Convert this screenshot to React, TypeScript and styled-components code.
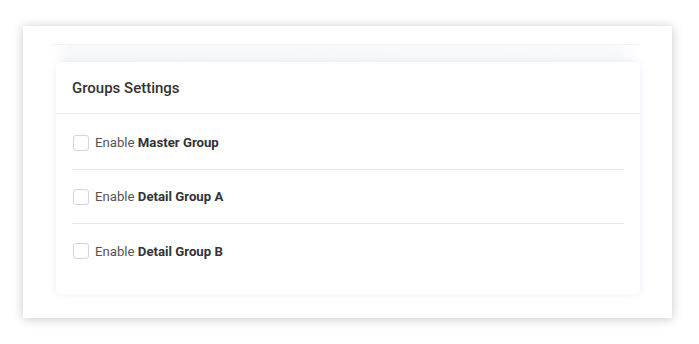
import React from "react";
import styled, { createGlobalStyle } from "styled-components";

const GlobalStyle = createGlobalStyle`
  html, body {
    margin: 0;
    padding: 0;
    background: #ffffff;
  }
`;

const groups = ["Master Group", "Detail Group A", "Detail Group B"];

const App = () => {
  return (
    <>
      <GlobalStyle />
      <Page>
        <Frame>
          <TopStrip />
          <Card>
            <CardHeader>Groups Settings</CardHeader>
            <CardBody>
              {groups.map((g, i) => (
                <Row key={g} last={i === groups.length - 1}>
                  <Check type="checkbox" />
                  <Label>
                    Enable <b>{g}</b>
                  </Label>
                </Row>
              ))}
            </CardBody>
          </Card>
        </Frame>
      </Page>
    </>
  );
};

export default App;

const Page = styled.div`
  width: 699px;
  height: 344px;
  padding: 26px 27px 0 23px;
  box-sizing: border-box;
  overflow: hidden;
`;

const Frame = styled.div`
  width: 649px;
  height: 292px;
  background: #ffffff;
  box-shadow: 0 1px 10px rgba(0, 0, 0, 0.22);
  padding: 18px 32px 0 33px;
  box-sizing: border-box;
  overflow: hidden;
`;

const TopStrip = styled.div`
  height: 18px;
  margin-left: -4px;
  background: linear-gradient(
    to right,
    rgba(246, 247, 250, 0) 0%,
    #f7f8fa 3%,
    #f8f9fb 96%,
    rgba(248, 249, 251, 0) 100%
  );
  border-top: 1px solid #f2f3f6;
  box-sizing: border-box;
`;

const Card = styled.div`
  background: #ffffff;
  border-radius: 6px;
  box-shadow: 0 0 8px rgba(90, 100, 170, 0.1);
  font-family: Roboto, "Noto Sans", sans-serif;
`;

const CardHeader = styled.div`
  height: 51px;
  display: flex;
  align-items: center;
  padding: 0 16px;
  border-bottom: 1px solid #ececf0;
  font-size: 15px;
  font-weight: 500;
  color: #333333;
`;

const CardBody = styled.div`
  padding: 2px 16px 16px;
`;

const Row = styled.div<{ last?: boolean }>`
  height: 54px;
  display: flex;
  align-items: center;
  gap: 6px;
  border-bottom: ${(p) => (p.last ? "none" : "1px solid #e6e6ea")};
  box-sizing: border-box;
`;

const Check = styled.input`
  appearance: none;
  margin: 0 0 0 1px;
  width: 16px;
  height: 16px;
  border: 1px solid #d3d5dc;
  border-radius: 3px;
  background: #ffffff;
  box-sizing: border-box;
`;

const Label = styled.span`
  font-size: 13.2px;
  color: #555555;

  b {
    color: #333333;
    font-weight: 700;
  }
`;
